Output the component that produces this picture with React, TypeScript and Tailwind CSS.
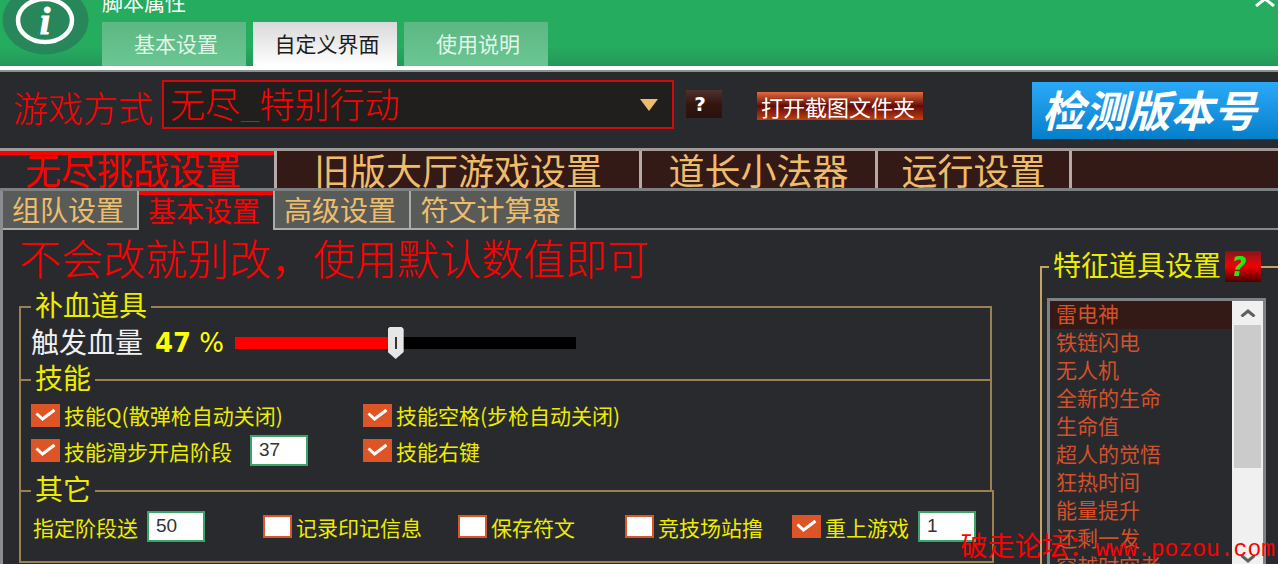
import { useState, type ReactNode } from 'react';

const headerTabs = ['基本设置', '自定义界面', '使用说明'];

const traits = [
  '雷电神',
  '铁链闪电',
  '无人机',
  '全新的生命',
  '生命值',
  '超人的觉悟',
  '狂热时间',
  '能量提升',
  '还剩一发',
  '穿越时空者',
];

function InfoLogo() {
  return (
    <svg className="block h-[56px] w-[92px] shrink-0" viewBox="0 0 92 56" aria-hidden="true">
      <ellipse cx="45.500" cy="20" rx="43" ry="34.500" fill="#27875a" />
      <ellipse cx="45" cy="20.500" rx="27" ry="21.500" fill="none" stroke="#fff" strokeWidth="4.500" />
      <text
        x="45"
        y="34"
        textAnchor="middle"
        fill="#fff"
        stroke="#fff"
        strokeWidth="1"
        fontFamily="Liberation Serif, serif"
        fontWeight="700"
        fontStyle="italic"
        fontSize="38"
      >
        i
      </text>
    </svg>
  );
}

function Header() {
  const [active, setActive] = useState(1);
  return (
    <header className="flex h-[66px] items-end overflow-hidden bg-linear-to-b from-[#26ac5f] from-70% to-[#23985a]">
      <div className="self-start">
        <InfoLogo />
      </div>
      <div className="ml-[10px] flex flex-1 flex-col">
        <h1 className="mb-[9px] text-[21px] leading-6 text-white">脚本属性</h1>
        <nav className="flex gap-[7px]">
          {headerTabs.map((t, i) => (
            <button
              key={t}
              type="button"
              onClick={() => setActive(i)}
              className={
                i === active
                  ? 'h-[44px] w-[144px] bg-linear-to-b from-[#d9d9d9] to-white pl-1 text-[21px] text-[#1c1c1c]'
                  : 'h-[44px] w-[144px] bg-linear-to-b from-[#5cb783] to-[#6ac692] pl-1 text-[21px] text-[#e3f6ea]'
              }
            >
              {t}
            </button>
          ))}
        </nav>
      </div>
      <button type="button" aria-label="关闭" className="-mt-[9px] mr-[2px] self-start">
        <svg className="block h-4 w-[22px]" viewBox="0 0 22 16" fill="none" stroke="#fff" strokeWidth="3">
          <path d="M2 1 20 15M20 1 2 15" />
        </svg>
      </button>
    </header>
  );
}

function Toolbar() {
  return (
    <div className="flex h-[76px] items-start pl-[13px]">
      <label htmlFor="mode" className="mt-[11px] w-[149px] text-[35px] leading-[48px] font-light text-[#ff0000]">
        游戏方式
      </label>
      <div className="mt-[8px] grid w-[512px] items-center">
        <select
          id="mode"
          className="col-start-1 row-start-1 h-[49px] appearance-none border-2 border-[#d20a0e] bg-[#211f1d] pb-1 pl-[6px] text-[35px] leading-[39px] font-light text-[#ff0000]"
        >
          <option>无尽_特别行动</option>
        </select>
        <svg
          className="pointer-events-none col-start-1 row-start-1 mr-4 h-3 w-[18px] justify-self-end"
          viewBox="0 0 18 12"
        >
          <path d="M0 0h18L9 12z" fill="#edbd6c" />
        </svg>
      </div>
      <button
        type="button"
        className="mt-[18px] ml-3 h-7 w-9 bg-linear-to-b from-[#50322c] via-[#33160f] to-[#2a110d] pr-2 font-['DejaVu_Sans',sans-serif] text-[20px] leading-7 font-bold text-white"
      >
        ?
      </button>
      <button
        type="button"
        className="mt-[20px] ml-[35px] h-7 w-[166px] bg-linear-to-b from-[#e46a3d] via-[#640a08] to-[#c03f13] pr-1 text-[22px] leading-7 text-white"
      >
        打开截图文件夹
      </button>
      <button
        type="button"
        className="mt-[10px] ml-auto h-[57px] w-[246px] bg-linear-to-b from-[#2aa9f8] to-[#0380cb] pr-3 pb-[6px] text-[43px] leading-[50px] font-bold text-white italic"
      >
        检测版本号
      </button>
    </div>
  );
}

function MainTabs() {
  const base = 'h-[37px] border-r-3 border-[#b5aaa8] pb-[1px] text-[36px] leading-[36px] whitespace-nowrap ';
  const idle = 'bg-[#331a16] text-[#edbd6c] ';
  return (
    <nav className="flex h-[43px] border-t-3 border-b-3 border-t-[#a09a99] border-b-[#7d8081] bg-[#331a16]">
      <button
        type="button"
        className={base + 'w-[277px] bg-[#292a2e] pr-2 text-[#ff0000] shadow-[inset_0_4px_0_#ff0000]'}
      >
        无尽挑战设置
      </button>
      <button type="button" className={base + idle + 'w-[365px]'}>
        旧版大厅游戏设置
      </button>
      <button type="button" className={base + idle + 'w-[236px]'}>
        道长小法器
      </button>
      <button type="button" className={base + idle + 'w-[194px]'}>
        运行设置
      </button>
    </nav>
  );
}

function SubTabs() {
  const idle =
    'h-[39px] border-r-2 border-b-2 border-[#a9acad] bg-[#595b58] pr-1 text-[28px] leading-[37px] text-[#edbd6c] ';
  return (
    <nav className="flex">
      <button type="button" className={idle + 'w-[136px]'}>
        组队设置
      </button>
      <button
        type="button"
        className="h-[39px] w-[134px] pr-1 text-[28px] leading-[37px] text-[#ff0000] shadow-[inset_0_4px_0_#ff0000]"
      >
        基本设置
      </button>
      <button type="button" className={idle + 'w-[138px] border-l-2'}>
        高级设置
      </button>
      <button type="button" className={idle + 'w-[165px]'}>
        符文计算器
      </button>
      <div className="flex-1 border-b-2 border-[#86888b]" />
    </nav>
  );
}

function Check({ label, on = false, className = '' }: { label: string; on?: boolean; className?: string }) {
  return (
    <label className={'flex items-center gap-1 whitespace-nowrap ' + className}>
      <span className="grid h-[23px] w-[29px] shrink-0">
        <input
          type="checkbox"
          defaultChecked={on}
          className="peer col-start-1 row-start-1 h-full w-full appearance-none border-2 border-[#d9562a] bg-white checked:bg-[#de5425]"
        />
        <svg
          className="pointer-events-none invisible col-start-1 row-start-1 h-full w-full peer-checked:visible"
          viewBox="0 0 29 23"
          fill="none"
          stroke="#fff"
          strokeWidth="3"
        >
          <path d="M5.500 9.500 11.500 15 23.500 6" />
        </svg>
      </span>
      {label}
    </label>
  );
}

function NumberBox({ value, label }: { value: string; label: string }) {
  return (
    <input
      type="text"
      aria-label={label}
      defaultValue={value}
      className="h-[31px] w-[58px] border-2 border-[#3aa469] bg-white px-[7px] pb-[2px] font-['Liberation_Sans',sans-serif] text-[19px] text-[#333]"
    />
  );
}

function Group({ title, className, children }: { title: string; className: string; children: ReactNode }) {
  return (
    <fieldset className={'border-[#9a8052] pl-[10px] ' + className}>
      <legend className="px-1 pb-[6px] text-[28px] leading-[22px] text-[#ecec00]">{title}</legend>
      {children}
    </fieldset>
  );
}

function HealthSlider() {
  const [value, setValue] = useState(47);
  return (
    <div className="flex items-center">
      <label htmlFor="hp" className="pb-1 text-[28px] leading-7 text-[#f0f0f0]">
        触发血量
      </label>
      <output
        htmlFor="hp"
        className="ml-3 flex gap-2 font-['DejaVu_Sans',sans-serif] text-[26px] leading-8 text-[#ffff00]"
      >
        <b>{value}</b>
        <span>%</span>
      </output>
      <input
        id="hp"
        type="range"
        min={0}
        max={100}
        value={value}
        onChange={(e) => setValue(Number(e.target.value))}
        style={{ backgroundImage: `linear-gradient(to right, #ff0000 ${value}%, #000 ${value}%)` }}
        className="ml-[11px] h-3 w-[341px] appearance-none [&::-webkit-slider-thumb]:h-8 [&::-webkit-slider-thumb]:w-4 [&::-webkit-slider-thumb]:appearance-none [&::-webkit-slider-thumb]:bg-[linear-gradient(#333,#333)] [&::-webkit-slider-thumb]:bg-[#e6e6e6] [&::-webkit-slider-thumb]:bg-size-[2px_12px] [&::-webkit-slider-thumb]:bg-center [&::-webkit-slider-thumb]:bg-no-repeat [&::-webkit-slider-thumb]:[clip-path:polygon(0_6%,12%_0,88%_0,100%_6%,100%_78%,50%_100%,0_78%)]"
      />
    </div>
  );
}

function SettingsGroups() {
  return (
    <div className="text-[21px] leading-6 text-[#ecec00]">
      <Group title="补血道具" className="mr-[2px] h-[88px] border-2 border-b-0">
        <div className="pt-[6px]">
          <HealthSlider />
        </div>
      </Group>
      <Group title="技能" className="-mt-[15px] mr-[2px] h-[126px] border-2 border-b-0">
        <div className="grid grid-cols-[332px_1fr] items-center gap-y-[3px] pt-[4px]">
          <Check label="技能Q(散弹枪自动关闭)" on className="h-[34px]" />
          <Check label="技能空格(步枪自动关闭)" on />
          <div className="flex items-center gap-[18px]">
            <Check label="技能滑步开启阶段" on />
            <NumberBox label="技能滑步开启阶段" value="37" />
          </div>
          <Check label="技能右键" on />
        </div>
      </Group>
      <Group title="其它" className="-mt-[15px] h-[86px] border-2">
        <div className="flex items-center pt-[6px]">
          <label className="ml-[2px] flex items-center gap-[9px]">
            指定阶段送
            <NumberBox label="指定阶段送" value="50" />
          </label>
          <Check label="记录印记信息" className="ml-[58px]" />
          <Check label="保存符文" className="ml-9" />
          <Check label="竞技场站撸" className="ml-[50px]" />
          <Check label="重上游戏" on className="mr-[9px] ml-[29px]" />
          <NumberBox label="重上游戏" value="1" />
        </div>
      </Group>
    </div>
  );
}

function TraitList() {
  const [selected, setSelected] = useState(0);
  return (
    <fieldset className="h-[330px] w-[238px] shrink-0 border-t-2 border-l-2 border-[#c8a261] pr-3 pl-[5px]">
      <legend className="ml-[2px] flex items-center gap-1 pl-1 text-[28px] leading-6 text-[#ecec00]">
        <span className="pb-[6px]">特征道具设置</span>
        <button
          type="button"
          className="h-[31px] w-9 bg-linear-to-b from-[#8a1116] via-[#f00000] to-[#4a0000] pr-2 font-['DejaVu_Sans',sans-serif] text-[26px] leading-[30px] font-bold text-[#12f012] italic"
        >
          ?
        </button>
      </legend>
      <div className="mt-4 flex h-[276px] border-3 border-[#7f8184]">
        <ul role="listbox" aria-label="特征道具设置" className="flex-1 text-[21px] leading-6 text-[#d2512a]">
          {traits.map((t, i) => (
            <li
              key={t}
              role="option"
              aria-selected={i === selected}
              onClick={() => setSelected(i)}
              className={i === selected ? 'h-[28px] bg-[#331a16] pl-[6px]' : 'h-[28px] pl-[6px]'}
            >
              {t}
            </li>
          ))}
        </ul>
        <div className="flex w-[31px] flex-col bg-[#f0f0f0] px-[2px]">
          <button type="button" aria-label="向上滚动" className="flex h-6 items-center justify-center">
            <svg className="h-2 w-4" viewBox="0 0 16 8" fill="none" stroke="#606060" strokeWidth="3">
              <path d="M1.500 7.500 8 2l6.500 5.500" />
            </svg>
          </button>
          <div className="h-[143px] bg-[#cbcbcb]" />
          <button type="button" aria-label="向下滚动" className="mt-auto flex h-6 items-center justify-center">
            <svg className="h-2 w-4" viewBox="0 0 16 8" fill="none" stroke="#606060" strokeWidth="3">
              <path d="M1.500 .500 8 6l6.500-5.500" />
            </svg>
          </button>
        </div>
      </div>
    </fieldset>
  );
}

export default function App() {
  return (
    <div className="relative h-screen overflow-hidden bg-[#292a2e] font-['Noto_Sans_CJK_SC',sans-serif]">
      <Header />
      <div className="h-[6px] border-b-2 border-[#8b918f] bg-white" />
      <Toolbar />
      <MainTabs />
      <div className="border-l-3 border-[#8b8d90]">
        <SubTabs />
        <main className="flex pl-4">
          <div className="flex-1">
            <p className="mt-1 mb-[13px] text-[42px] leading-[46px] font-light whitespace-nowrap text-[#ff0000]">
              不会改就别改，使用默认数值即可
            </p>
            <SettingsGroups />
          </div>
          <div className="mt-[21px] ml-[46px]">
            <TraitList />
          </div>
        </main>
      </div>
      <p className="absolute right-[3px] bottom-0 text-[27px] leading-7 whitespace-nowrap text-[#ff0000]">
        破走论坛：<span className="font-['Liberation_Mono',monospace] text-[23px]">www.pozou.com</span>
      </p>
    </div>
  );
}
